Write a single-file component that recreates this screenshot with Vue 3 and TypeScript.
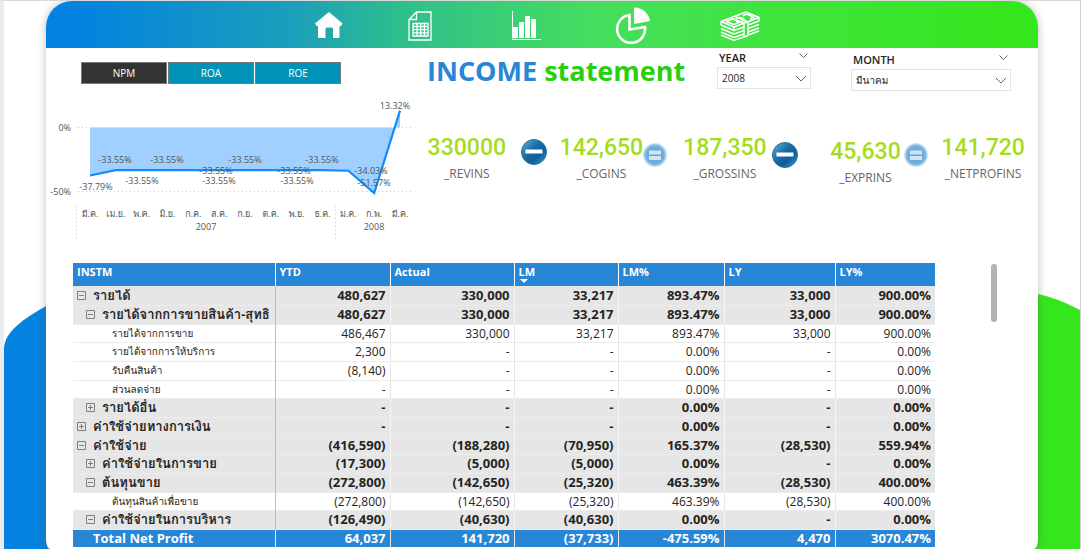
<script setup lang="ts">
import { ref } from 'vue'

const tabs = ['NPM', 'ROA', 'ROE']
const activeTab = ref('NPM')
const year = ref('2008')
const month = ref('มีนาคม')

interface Point { month: string; value: number; lx: number; ly: number }
const points: Point[] = [
  { month: 'มี.ค.', value: -37.79, lx: 96, ly: 190 },
  { month: 'เม.ย.', value: -33.55, lx: 115, ly: 163 },
  { month: 'พ.ค.', value: -33.55, lx: 142, ly: 184 },
  { month: 'มิ.ย.', value: -33.55, lx: 167, ly: 163 },
  { month: 'ก.ค.', value: -33.55, lx: 216, ly: 174 },
  { month: 'ส.ค.', value: -33.55, lx: 219, ly: 184 },
  { month: 'ก.ย.', value: -33.55, lx: 245, ly: 163 },
  { month: 'ต.ค.', value: -33.55, lx: 294, ly: 174 },
  { month: 'พ.ย.', value: -33.55, lx: 297, ly: 184 },
  { month: 'ธ.ค.', value: -33.55, lx: 322, ly: 163 },
  { month: 'ม.ค.', value: -34.03, lx: 371, ly: 174 },
  { month: 'ก.พ.', value: -51.57, lx: 374, ly: 186 },
  { month: 'มี.ค.', value: 13.32, lx: 395, ly: 109 },
]
const px = (i: number) => 90 + (i * 310) / 12
const py = (v: number) => 127.5 - v * 1.27
const line = points.map((p, i) => `${px(i)},${py(p.value)}`).join(' ')
const area = `90,127.5 ${line} 400,127.5`

interface Kpi { value: string; label: string; op?: 'minus' | 'equals'; level: string }
const kpis: Kpi[] = [
  { value: '330000', label: '_REVINS', op: 'minus', level: 'base' },
  { value: '142,650', label: '_COGINS', op: 'equals', level: 'base' },
  { value: '187,350', label: '_GROSSINS', op: 'minus', level: 'base' },
  { value: '45,630', label: '_EXPRINS', op: 'equals', level: 'low' },
  { value: '141,720', label: '_NETPROFINS', level: 'base' },
]

const columns = ['INSTM', 'YTD', 'Actual', 'LM', 'LM%', 'LY', 'LY%']
interface Row { name: string; level: number; open?: boolean; cells: string[] }
const rows: Row[] = [
  { name: 'รายได้', level: 0, open: true, cells: ['480,627', '330,000', '33,217', '893.47%', '33,000', '900.00%'] },
  { name: 'รายได้จากการขายสินค้า-สุทธิ', level: 1, open: true, cells: ['480,627', '330,000', '33,217', '893.47%', '33,000', '900.00%'] },
  { name: 'รายได้จากการขาย', level: 2, cells: ['486,467', '330,000', '33,217', '893.47%', '33,000', '900.00%'] },
  { name: 'รายได้จากการให้บริการ', level: 2, cells: ['2,300', '-', '-', '0.00%', '-', '0.00%'] },
  { name: 'รับคืนสินค้า', level: 2, cells: ['(8,140)', '-', '-', '0.00%', '-', '0.00%'] },
  { name: 'ส่วนลดจ่าย', level: 2, cells: ['-', '-', '-', '0.00%', '-', '0.00%'] },
  { name: 'รายได้อื่น', level: 1, open: false, cells: ['-', '-', '-', '0.00%', '-', '0.00%'] },
  { name: 'ค่าใช้จ่ายทางการเงิน', level: 0, open: false, cells: ['-', '-', '-', '0.00%', '-', '0.00%'] },
  { name: 'ค่าใช้จ่าย', level: 0, open: true, cells: ['(416,590)', '(188,280)', '(70,950)', '165.37%', '(28,530)', '559.94%'] },
  { name: 'ค่าใช้จ่ายในการขาย', level: 1, open: false, cells: ['(17,300)', '(5,000)', '(5,000)', '0.00%', '-', '0.00%'] },
  { name: 'ต้นทุนขาย', level: 1, open: true, cells: ['(272,800)', '(142,650)', '(25,320)', '463.39%', '(28,530)', '400.00%'] },
  { name: 'ต้นทุนสินค้าเพื่อขาย', level: 2, cells: ['(272,800)', '(142,650)', '(25,320)', '463.39%', '(28,530)', '400.00%'] },
  { name: 'ค่าใช้จ่ายในการบริหาร', level: 1, open: true, cells: ['(126,490)', '(40,630)', '(40,630)', '0.00%', '-', '0.00%'] },
]
const totals = ['64,037', '141,720', '(37,733)', '-475.59%', '4,470', '3070.47%']
</script>

<template>
  <div class="page">
    <svg class="blob blob-left" viewBox="0 0 46 245" preserveAspectRatio="none" aria-hidden="true">
      <path d="M0 245V44C1 28 18 15 46 0V245Z" fill="#0482e0" />
    </svg>
    <svg class="blob blob-right" viewBox="0 0 46 256" preserveAspectRatio="none" aria-hidden="true">
      <path d="M0 256V0Q24 5 46 17V256Z" fill="#36e61c" />
    </svg>

    <main class="card">
      <nav class="bar">
        <a href="#home" aria-label="Home">
          <svg width="28" height="27" viewBox="0 0 28 27"><path d="M14 0 27.5 11.5 26 14H24.500V25Q24.500 26 23.500 26H18V17Q18 15.500 16.500 15.500H12Q10.500 15.500 10.500 17V26H4Q3 26 3 25V14H1.500L0 11.500Z" fill="#fff" /></svg>
        </a>
        <a href="#statement" aria-label="Statement">
          <svg width="24" height="30" viewBox="0 0 24 30" fill="none" stroke="#fff" stroke-width="1.300"><path d="M8.500 1H23V29H1V8.500ZM8.500 1V8.500H1" /><path d="M5 12.500H20V25H5ZM5 15.500H20M5 18.700H20M5 21.800H20M9 12.500V25M12.700 12.500V25M16.400 12.500V25" /></svg>
        </a>
        <a href="#charts" aria-label="Charts">
          <svg width="30" height="30" viewBox="0 0 30 30"><path d="M1.500 0V28.500H30" fill="none" stroke="#fff" /><path d="M2 16H7V27H2ZM8 11H13V27H8ZM14 5H19V27H14ZM20 8H25V27H20Z" fill="#fff" /></svg>
        </a>
        <a href="#share" aria-label="Share">
          <svg width="36" height="37" viewBox="0 0 36 37"><path d="M14.500 8A14 14 0 1 0 30 20L14.500 22.500Z" fill="none" stroke="#fff" stroke-width="2.600" /><path d="M19 .5A16 16 0 0 1 35 14L19 17Z" fill="#fff" /></svg>
        </a>
        <a href="#cash" aria-label="Cash">
          <svg width="40" height="30" viewBox="0 0 40 30" fill="none" stroke="#fff" stroke-width="1.400" stroke-linejoin="round"><path d="M1 10.500 26 1 39 6.500 14 16Z" /><path d="M6 10.500 13 8 20 11 14 13.500ZM23 4.500 27 3 34 6.500 30 8" /><path d="M11 7 24 12.500V26L28 24.500V11L15 5.500" /><ellipse cx="20" cy="8.500" rx="4" ry="2" /><path d="M1 14 14 19.500 24 16M1 17.500 14 23 24 19.500M1 21 14 26.500 24 23M1 24 14 29.300 24 26M28 14 39 10M28 17.500 39 13.500M28 21 39 17M28 24 39 20M1 10.500V14M14 16V19.500M39 6.500V10" /></svg>
        </a>
      </nav>

      <section class="top">
        <div class="trend">
          <div class="tabs">
            <button v-for="t in tabs" :key="t" type="button" :class="{ active: t === activeTab }" @click="activeTab = t">{{ t }}</button>
          </div>
          <svg class="chart" viewBox="46 90 368 150" role="img" aria-label="Net profit margin by month">
            <g class="guides">
              <path d="M78 127.500H412M78 191.500H412M76.500 206V240M335.500 206V240" />
            </g>
            <polygon :points="area" fill="#a0d0ff" />
            <polyline :points="line" fill="none" stroke="#118dff" stroke-width="2.200" />
            <text class="axis" x="71" y="131" text-anchor="end">0%</text>
            <text class="axis" x="71" y="195" text-anchor="end">-50%</text>
            <g text-anchor="middle">
              <text v-for="(p, i) in points" :key="'v' + i" :x="p.lx" :y="p.ly">{{ p.value.toFixed(2) }}%</text>
              <text v-for="(p, i) in points" :key="'m' + i" class="month" :x="px(i)" y="217">{{ p.month }}</text>
              <text x="206" y="230">2007</text>
              <text x="374" y="230">2008</text>
            </g>
          </svg>
        </div>

        <div class="summary">
          <div class="heading">
            <h1><span>INCOME</span> statement</h1>
            <div class="slicer year">
              <div class="slicer-head">
                <label for="year">YEAR</label>
                <svg width="9" height="6" viewBox="0 0 9 6"><path d="M.5 .5 4.500 4.500 8.500 .5" /></svg>
              </div>
              <div class="box">
                <select id="year" v-model="year"><option>2008</option><option>2007</option></select>
                <svg width="12" height="8" viewBox="0 0 12 8"><path d="M1 1 6 6 11 1" /></svg>
              </div>
            </div>
            <div class="slicer month-slicer">
              <div class="slicer-head">
                <label for="month">MONTH</label>
                <svg width="9" height="6" viewBox="0 0 9 6"><path d="M.5 .5 4.500 4.500 8.500 .5" /></svg>
              </div>
              <div class="box">
                <select id="month" v-model="month"><option>มีนาคม</option><option>กุมภาพันธ์</option></select>
                <svg width="12" height="8" viewBox="0 0 12 8"><path d="M1 1 6 6 11 1" /></svg>
              </div>
            </div>
          </div>

          <div class="kpis">
            <template v-for="k in kpis" :key="k.label">
              <div class="kpi" :class="k.level">
                <strong>{{ k.value }}</strong>
                <span>{{ k.label }}</span>
              </div>
              <svg v-if="k.op === 'minus'" class="op" width="28" height="28" viewBox="0 0 28 28" role="img" aria-label="minus">
                <defs><linearGradient id="ball" x1="0" y1="0" x2="1" y2="1"><stop offset="0" stop-color="#6bb4dc" /><stop offset=".4" stop-color="#1b6ea8" /><stop offset=".65" stop-color="#0d5c96" /><stop offset="1" stop-color="#35a4d8" /></linearGradient></defs>
                <circle cx="14" cy="14" r="12.500" fill="url(#ball)" stroke="#2c6f9c" />
                <rect x="5.500" y="11.500" width="17" height="4" fill="#fff" />
              </svg>
              <svg v-else-if="k.op === 'equals'" class="op equals" width="24" height="26" viewBox="0 0 24 26" role="img" aria-label="equals">
                <defs><radialGradient id="soft"><stop offset="0" stop-color="#5c9fd2" /><stop offset=".75" stop-color="#6fb0de" /><stop offset="1" stop-color="#d8eaf7" /></radialGradient></defs>
                <circle cx="12" cy="14" r="12" fill="url(#soft)" />
                <path d="M6 9.500H18V13.500H6ZM6 15H18V19H6Z" fill="#d3e3ef" />
              </svg>
            </template>
          </div>
        </div>
      </section>

      <section class="report">
        <table>
          <colgroup><col v-for="c in columns" :key="c" :class="'c-' + columns.indexOf(c)" /></colgroup>
          <thead>
            <tr>
              <th v-for="c in columns" :key="c" scope="col">{{ c }}<svg v-if="c === 'LM'" class="sort" width="8" height="4" viewBox="0 0 8 4"><path d="M0 0H8L4 4Z" fill="#fff" /></svg></th>
            </tr>
          </thead>
          <tbody>
            <tr v-for="r in rows" :key="r.name" :class="{ group: r.level < 2 }">
              <th scope="row">
                <div class="name" :class="'level-' + r.level">
                  <button v-if="r.open !== undefined" type="button" :aria-label="r.open ? 'Collapse' : 'Expand'">
                    <svg width="9" height="9" viewBox="0 0 9 9"><path d="M.5 .5H8.500V8.500H.5ZM2 4.500H7" /><path v-if="!r.open" d="M4.500 2V7" /></svg>
                  </button>
                  <span>{{ r.name }}</span>
                </div>
              </th>
              <td v-for="(c, i) in r.cells" :key="i">{{ c }}</td>
            </tr>
          </tbody>
          <tfoot>
            <tr>
              <th scope="row">Total Net Profit</th>
              <td v-for="(c, i) in totals" :key="i">{{ c }}</td>
            </tr>
          </tfoot>
        </table>
        <div class="thumb"></div>
      </section>
    </main>
  </div>
</template>

<style>
body {
  margin: 0;
}
</style>

<style scoped>
.page {
  position: relative;
  box-sizing: border-box;
  min-height: 100vh;
  overflow: hidden;
  padding: 0 42px;
  border-top: 1px solid #d9d9d9;
  border-left: 4px solid #ececec;
  border-right: 1px solid #d0d0d0;
  background: #fff;
  font-family: "Open Sans", "Noto Sans", Loma, "Noto Sans Thai Looped", "Noto Sans Thai", sans-serif;
  color: #252423;
}
.blob {
  position: absolute;
  bottom: 0;
  width: 46px;
}
.blob-left {
  left: 0;
  height: 245px;
}
.blob-right {
  right: 0;
  height: 256px;
}
.card {
  position: relative;
  min-height: calc(100vh - 1px);
  background: #fff;
  border-radius: 26px 26px 4px 4px / 26px 26px 10px 10px;
  box-shadow: 0 0 9px rgba(90, 90, 90, 0.4);
}
.bar {
  display: grid;
  box-sizing: border-box;
  grid-template-columns: 92px 90px 122px 92px 122px;
  padding: 2px 0 0 237px;
  height: 47px;
  align-items: center;
  border-radius: 26px 26px 0 0;
  background: linear-gradient(90deg, #0482e0 3%, #1c9fb9 25%, #2fbf8c 36%, #45dd5f 55%, #40e43f 72%, #36e61c 98%);
}
.bar a {
  display: flex;
  justify-content: center;
}
.top {
  display: grid;
  grid-template-columns: 368px 1fr;
  min-height: 215px;
}
.tabs {
  display: flex;
  gap: 1px;
  padding: 14px 0 0 35px;
}
.tabs button {
  width: 86px;
  height: 22px;
  padding: 0;
  border: 1px solid #6e7c7f;
  background: #0093b8;
  color: #fff;
  font: 10px "Open Sans", sans-serif;
}
.tabs button.active {
  background: #333;
}
.chart {
  display: block;
  width: 368px;
  height: 150px;
  margin-top: 6px;
}
.chart text {
  font-size: 9px;
  fill: #555;
}
.guides path {
  stroke: #c8c8c8;
  stroke-dasharray: 1 3;
  fill: none;
}
.summary {
  padding-right: 12px;
}
.heading {
  display: flex;
  align-items: flex-start;
  height: 81px;
}
h1 {
  margin: 0 0 0 13px;
  flex: 1;
  font-size: 27px;
  line-height: 45px;
  font-weight: 700;
  color: #27cf0c;
  white-space: nowrap;
}
h1 span {
  color: #2886d6;
}
.slicer {
  font-size: 11px;
}
.year {
  width: 94px;
  margin-right: 40px;
}
.month-slicer {
  width: 160px;
  margin-right: 15px;
  padding-top: 2px;
}
.slicer-head {
  display: flex;
  justify-content: space-between;
  align-items: center;
  height: 19px;
  padding: 0 3px 0 2px;
}
.slicer-head label {
  line-height: 15px;
  font-weight: 600;
}
.slicer-head svg {
  margin-bottom: 4px;
}
.slicer svg {
  fill: none;
  stroke: #666;
}
.box {
  position: relative;
}
.box select {
  appearance: none;
  box-sizing: border-box;
  width: 100%;
  height: 22px;
  padding: 0 4px;
  border: 1px solid #e2e2e2;
  border-radius: 0;
  background: #fff;
  color: #252423;
  font: 10px "Open Sans", Loma, "Noto Sans Thai Looped", sans-serif;
}
.box svg {
  position: absolute;
  right: 4px;
  top: 8px;
  pointer-events: none;
}
.kpis {
  display: grid;
  grid-template-columns: 106fr 40fr 82fr 36fr 92fr 56fr 78fr 36fr 86fr;
  align-items: start;
}
.kpi {
  display: flex;
  flex-direction: column;
  align-items: center;
}
.kpi.low {
  padding-top: 4px;
}
.kpi strong {
  font: 500 23px/37px Roboto, sans-serif;
  color: #a5dc22;
}
.kpi span {
  font-size: 12px;
  line-height: 16px;
  color: #666;
}
.op {
  margin-top: 9px;
}
.op.equals,
.op.equals ~ .op {
  margin-top: 12px;
}
.report {
  display: flex;
  align-items: flex-start;
  padding-left: 27px;
}
table {
  width: 862px;
  border-collapse: collapse;
  table-layout: fixed;
  font-size: 12px;
}
.c-0 { width: 202px; }
.c-1 { width: 115px; }
.c-2 { width: 124px; }
.c-3 { width: 104px; }
.c-4 { width: 106px; }
.c-5 { width: 111px; }
.c-6 { width: 100px; }
th,
td {
  box-sizing: border-box;
  padding: 0 4px;
  line-height: 17px;
  border-left: 1px solid #e6e6e6;
  white-space: nowrap;
}
th:first-child {
  border-left: 0;
}
td {
  text-align: right;
}
tbody tr {
  height: 19px;
  border-bottom: 1px solid #ececec;
}
tbody tr:nth-child(3n) {
  height: 18px;
}
tbody td:nth-child(2) {
  border-left-color: #bdbdbd;
}
thead th {
  height: 23px;
  background: #2886d6;
  border-left-color: #fff;
  color: #fff;
  font-size: 11px;
  text-align: left;
  vertical-align: top;
  position: relative;
}
.sort {
  position: absolute;
  left: 5px;
  bottom: 3px;
}
.group {
  background: #e6e6e6;
}
.group th,
.group td,
tfoot td {
  font-size: 13px;
  font-weight: 700;
}
.group td {
  border-left-color: #f5f5f5;
}
tbody th {
  font-size: 10px;
  font-weight: 400;
  text-align: left;
}
.name {
  display: flex;
  align-items: center;
  gap: 7px;
}
.level-1 {
  padding-left: 9px;
}
.level-2 {
  padding-left: 35px;
}
.name button {
  display: flex;
  padding: 0;
  border: 0;
  background: none;
}
.name svg {
  fill: none;
  stroke: #808080;
}
tfoot tr {
  height: 18px;
  background: #2886d6;
  color: #fff;
}
tfoot th {
  padding-left: 20px;
  font-size: 13px;
  text-align: left;
}
.thumb {
  width: 6px;
  height: 58px;
  margin: 1px 0 0 56px;
  border-radius: 3px;
  background: #b3b3b3;
}
</style>
